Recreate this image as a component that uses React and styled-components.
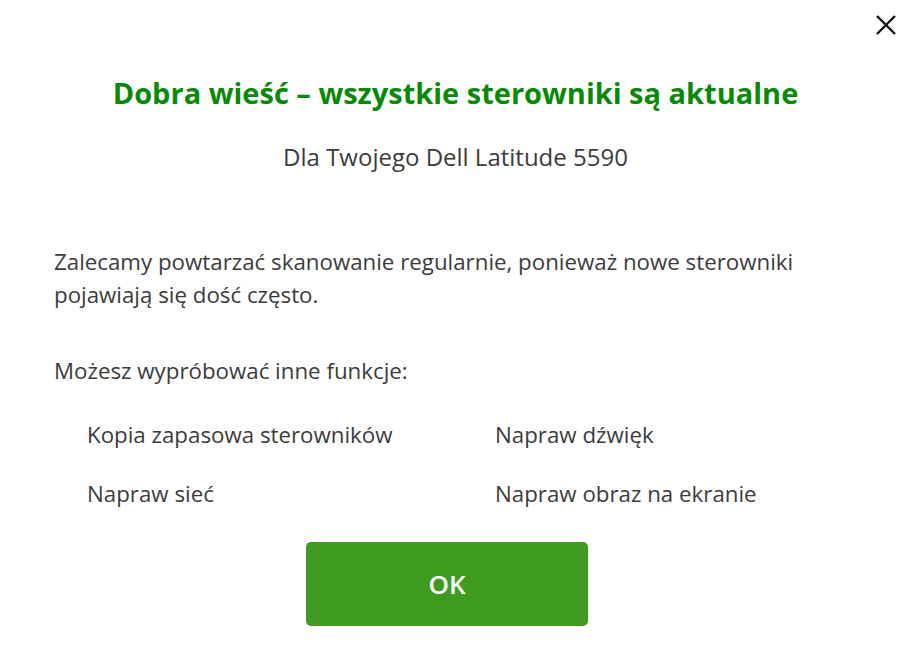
import React from "react";
import styled, { createGlobalStyle } from "styled-components";

const Global = createGlobalStyle`
  html, body { margin: 0; padding: 0; background: #fff; }
  body { font-family: "Segoe UI", "Open Sans", "Noto Sans", sans-serif; }
`;

const Dialog = styled.div`
  position: relative;
  width: 911px;
  height: 656px;
  box-sizing: border-box;
  padding: 73px 54px 0 54px;
  display: flex;
  flex-direction: column;
  color: #3c3c3c;
`;

const Close = styled.button`
  position: absolute;
  top: 12px;
  right: 12px;
  width: 26px;
  height: 26px;
  padding: 0;
  border: none;
  background: none;
  display: flex;
  align-items: center;
  justify-content: center;
`;

const Title = styled.h1`
  margin: 0;
  text-align: center;
  font-size: 29px;
  font-weight: 700;
  line-height: 40px;
  color: #088a08;
`;

const Subtitle = styled.p`
  margin: 28px 0 0;
  text-align: center;
  font-size: 24px;
  line-height: 32px;
  color: #3c3c3c;
`;

const Para = styled.p`
  margin: ${(p) => p.$top}px 0 0;
  font-size: 22.3px;
  line-height: 33px;
  color: #3c3c3c;
`;

const Grid = styled.div`
  margin: 31px 0 0 33px;
  display: grid;
  grid-template-columns: 408px 1fr;
  row-gap: 26px;
  font-size: 22.3px;
  line-height: 33px;
  color: #3c3c3c;
`;

const Button = styled.button`
  align-self: flex-start;
  margin: 32px 0 0 252px;
  width: 282px;
  height: 84px;
  border: none;
  border-radius: 5px;
  background: #3f9b1f;
  color: #fff;
  font-family: inherit;
  font-size: 26px;
  font-weight: 600;
`;

export default function App() {
  return (
    <>
      <Global />
      <Dialog>
        <Close aria-label="close">
          <svg width="22" height="22" viewBox="0 0 22 22">
            <path d="M2 2 L20 20 M20 2 L2 20" stroke="#111" strokeWidth="2.4" />
          </svg>
        </Close>
        <Title>Dobra wieść – wszystkie sterowniki są aktualne</Title>
        <Subtitle>Dla Twojego Dell Latitude 5590</Subtitle>
        <Para $top={72}>
          Zalecamy powtarzać skanowanie regularnie, ponieważ nowe sterowniki
          <br />
          pojawiają się dość często.
        </Para>
        <Para $top={43}>Możesz wypróbować inne funkcje:</Para>
        <Grid>
          <span>Kopia zapasowa sterowników</span>
          <span>Napraw dźwięk</span>
          <span>Napraw sieć</span>
          <span>Napraw obraz na ekranie</span>
        </Grid>
        <Button>OK</Button>
      </Dialog>
    </>
  );
}
